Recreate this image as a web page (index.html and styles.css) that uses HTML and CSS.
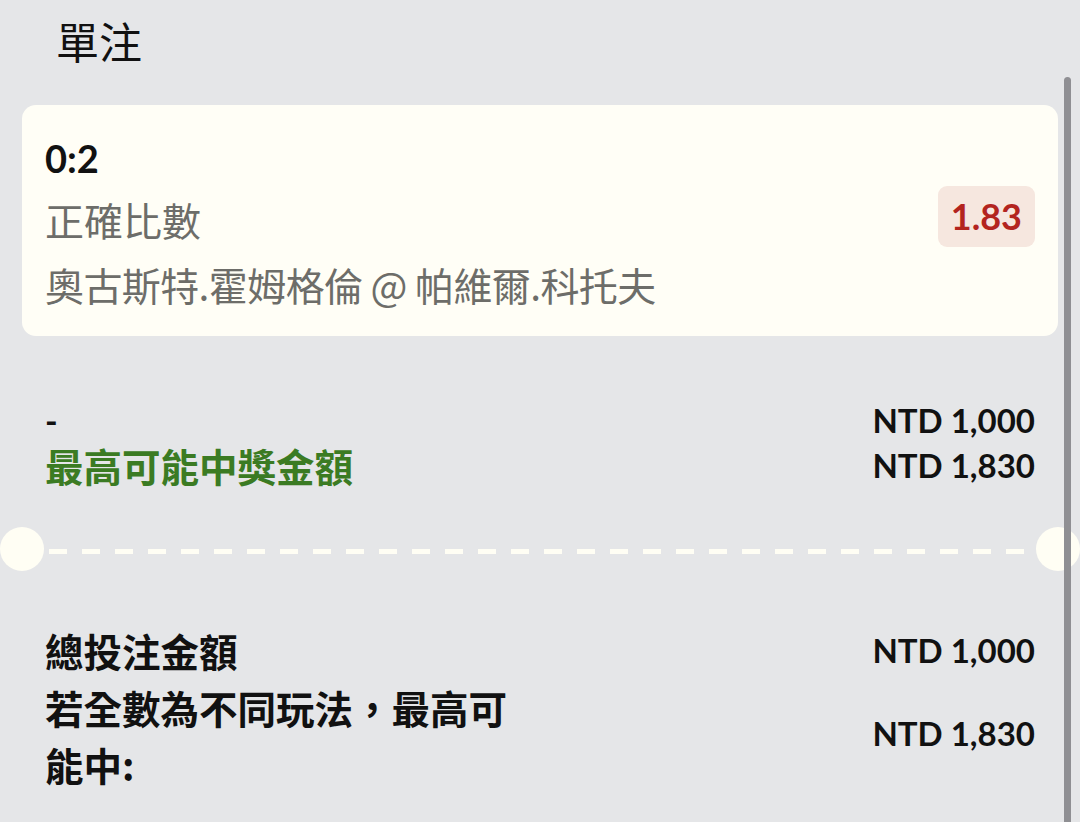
FILE: index.html
```html
<!DOCTYPE html>
<html lang="zh-Hant">
<head>
<meta charset="utf-8">
<title>單注</title>
<link rel="stylesheet" href="styles.css">
</head>
<body>
<div class="page">
  <h1 class="title">單注</h1>

  <div class="card">
    <div class="card-info">
      <div class="score">0:2</div>
      <div class="market">正確比數</div>
      <div class="match">奧古斯特.霍姆格倫 @ 帕維爾.科托夫</div>
    </div>
    <div class="odds">1.83</div>
  </div>

  <div class="summary">
    <div class="row">
      <div class="label dash">-</div>
      <div class="amount">NTD 1,000</div>
    </div>
    <div class="row">
      <div class="label win">最高可能中獎金額</div>
      <div class="amount">NTD 1,830</div>
    </div>
  </div>

  <div class="divider">
    <span class="notch"></span>
    <span class="dashes"></span>
    <span class="notch"></span>
  </div>

  <div class="totals">
    <div class="trow">
      <div class="tlabel">總投注金額</div>
      <div class="amount">NTD 1,000</div>
    </div>
    <div class="trow">
      <div class="tlabel">若全數為不同玩法，最高可能中:</div>
      <div class="amount up">NTD 1,830</div>
    </div>
  </div>

  <div class="scrollbar"></div>
</div>
</body>
</html>
```

FILE: styles.css
```css
html, body {
  margin: 0;
  padding: 0;
}

body {
  background: #e5e6e8;
  font-family: Lato, "Noto Sans CJK TC", "Noto Sans", sans-serif;
  color: #111;
  width: 1080px;
  height: 822px;
  overflow: hidden;
}

.page {
  position: relative;
  height: 822px;
  display: flex;
  flex-direction: column;
}

.title {
  margin: 0;
  padding: 10px 56px 0;
  font-family: "Noto Sans CJK TC", sans-serif;
  font-weight: 400;
  font-size: 43px;
  line-height: 60px;
  color: #111;
}

.card {
  margin: 35px 22px 0;
  background: #fffef6;
  border-radius: 14px;
  padding: 24px 23px 19px;
  display: flex;
  align-items: center;
  justify-content: space-between;
}

.card-info {
  display: flex;
  flex-direction: column;
}

.score {
  font-weight: 700;
  font-size: 38px;
  line-height: 58px;
  color: #111;
}

.market,
.match {
  font-family: "Noto Sans CJK TC", sans-serif;
  font-size: 39px;
  line-height: 65px;
  color: #6d6d69;
}

.match {
  letter-spacing: -0.6px;
}

.odds {
  align-self: center;
  margin-bottom: 13px;
  background: #f6e7df;
  color: #b3241e;
  border-radius: 9px;
  font-weight: 700;
  font-size: 36px;
  line-height: 61px;
  padding: 0 13px;
}

.summary {
  margin: 62px 45px 0;
  display: flex;
  flex-direction: column;
}

.row {
  display: flex;
  justify-content: space-between;
  align-items: center;
  height: 45px;
}

.label {
  font-weight: 700;
  line-height: 45px;
}

.dash {
  font-size: 34px;
  color: #111;
}

.win {
  font-family: "Noto Sans CJK TC", sans-serif;
  font-size: 38.5px;
  color: #3b7b23;
}

.amount {
  font-weight: 700;
  font-size: 33px;
  line-height: 45px;
  color: #111;
  white-space: nowrap;
}

.amount.up {
  margin-bottom: 5px;
}

.divider {
  margin-top: 39px;
  height: 44px;
  display: flex;
  align-items: center;
}

.notch {
  flex: none;
  width: 44px;
  height: 44px;
  border-radius: 50%;
  background: #fffef4;
}

.dashes {
  flex: 1;
  height: 5px;
  margin: 4px 5px 0;
  background: repeating-linear-gradient(to right, #fffef4 0 18px, transparent 18px 33px);
}

.totals {
  margin: 51px 45px 0;
  display: flex;
  flex-direction: column;
}

.trow {
  display: flex;
  justify-content: space-between;
  align-items: center;
}

.tlabel {
  max-width: 495px;
  font-family: "Noto Sans CJK TC", sans-serif;
  font-weight: 700;
  font-size: 38.5px;
  line-height: 57px;
  color: #111;
}

.scrollbar {
  position: absolute;
  top: 77px;
  bottom: 0;
  right: 9px;
  width: 7px;
  border-radius: 4px 4px 0 0;
  background: #8f8f93;
}
```
